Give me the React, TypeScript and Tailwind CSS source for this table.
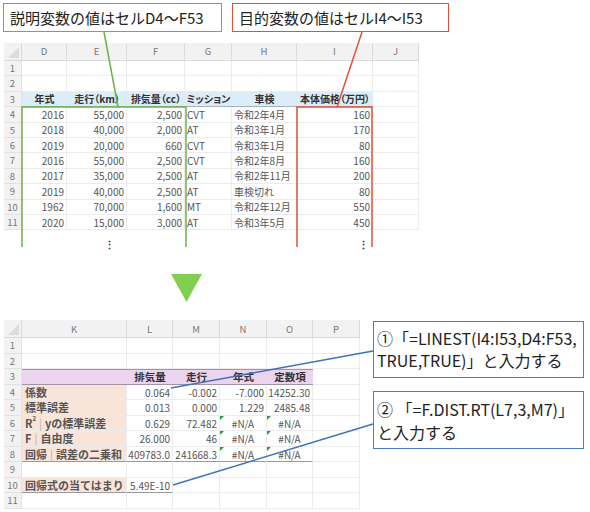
import React from "react";

const TOP = "grid grid-cols-[18px_45px_60px_58px_47px_65px_76px_46px]";
const BOT = "grid grid-cols-[18px_105px_46px_47px_47px_46px_47px]";

const topRows: string[][] = [
  ["2016", "55,000", "2,500", "CVT", "令和2年4月", "160"],
  ["2018", "40,000", "2,000", "AT", "令和3年1月", "170"],
  ["2019", "20,000", "660", "CVT", "令和3年1月", "80"],
  ["2016", "55,000", "2,500", "CVT", "令和2年8月", "160"],
  ["2017", "35,000", "2,500", "AT", "令和2年11月", "200"],
  ["2019", "40,000", "2,500", "AT", "車検切れ", "80"],
  ["1962", "70,000", "1,600", "MT", "令和2年12月", "550"],
  ["2020", "15,000", "3,000", "AT", "令和3年5月", "450"],
];

function RowHdr({ n, h }: { n: number; h: string }) {
  return (
    <div
      className={`${h} bg-[#f2f2f2] border-r border-b border-[#e2e2e2] text-[9.5px] text-[#777] flex items-center justify-center`}
    >
      {n}
    </div>
  );
}

function Corner() {
  return (
    <div className="h-[18px] bg-[#f2f2f2] border-r border-b border-[#dadada] relative">
      <div className="absolute right-[2px] bottom-[2px] w-0 h-0 border-l-[11px] border-l-transparent border-b-[11px] border-b-[#dcdcdc]" />
    </div>
  );
}

function ColHdr({ l }: { l: string }) {
  return (
    <div className="h-[18px] bg-[#f2f2f2] border-r border-b border-[#dadada] text-[9.5px] text-[#777] flex items-center justify-center">
      {l}
    </div>
  );
}

const tc = "h-[15.4px] border-r border-b border-[#ececec] text-[10px] text-[#555] flex items-center whitespace-nowrap";
const bc = "h-[15.5px] border-r border-b border-[#ececec] text-[10px] text-[#555] flex items-center whitespace-nowrap";

function ErrMark() {
  return (
    <div className="absolute left-0 top-0 w-0 h-0 border-t-[4px] border-t-[#2f9a3c] border-r-[4px] border-r-transparent" />
  );
}

function TopSheet() {
  return (
    <div className="ml-[4px] mt-[11px] w-[415px]">
      <div className={TOP}>
        <Corner />
        {["D", "E", "F", "G", "H", "I", "J"].map((c) => (
          <ColHdr key={c} l={c} />
        ))}
      </div>
      {[1, 2].map((n) => (
        <div key={n} className={TOP}>
          <RowHdr n={n} h="h-[15.4px]" />
          {[0, 1, 2, 3, 4, 5, 6].map((i) => (
            <div key={i} className={tc} />
          ))}
        </div>
      ))}
      <div className={TOP}>
        <RowHdr n={3} h="h-[15.4px]" />
        {["年式", "走行（km）", "排気量（cc）", "ミッション", "車検", "本体価格（万円）"].map((t) => (
          <div
            key={t}
            className="h-[15.4px] bg-[#dcedf8] border-b border-b-[#a5b2bb] text-[10px] font-bold text-[#333] flex items-center justify-center whitespace-nowrap [font-feature-settings:'palt']"
          >
            {t}
          </div>
        ))}
        <div className={tc} />
      </div>
      {topRows.map((r, idx) => (
        <div key={idx} className={TOP}>
          <RowHdr n={idx + 4} h="h-[15.4px]" />
          <div className={`${tc} justify-end pr-[2px]`}>{r[0]}</div>
          <div className={`${tc} justify-end pr-[2px]`}>{r[1]}</div>
          <div className={`${tc} justify-end pr-[2px]`}>{r[2]}</div>
          <div className={`${tc} pl-[2px]`}>{r[3]}</div>
          <div className={`${tc} pl-[2px]`}>{r[4]}</div>
          <div className={`${tc} justify-end pr-[2px]`}>{r[5]}</div>
          <div className={tc} />
        </div>
      ))}
      <div className="flex h-[22px] items-center pt-[6px] text-[11px] font-bold text-[#333] leading-none">
        <span className="ml-[100px]">⋮</span>
        <span className="ml-[243px]">⋮</span>
      </div>
    </div>
  );
}

const Sep = () => <span className="text-[#b0b0b0] font-normal mx-[3px]">|</span>;

function BotSheet() {
  const lbl = `${bc} bg-[#f9e4d9] font-bold !text-[11px] text-[#222] pl-[3px]`;
  const num = `${bc} justify-end pr-[2px]`;
  const na = `${bc} justify-center relative`;
  return (
    <div className="ml-[4px] w-[356px]">
      <div className={BOT}>
        <Corner />
        {["K", "L", "M", "N", "O", "P"].map((c) => (
          <ColHdr key={c} l={c} />
        ))}
      </div>
      {[1, 2].map((n) => (
        <div key={n} className={BOT}>
          <RowHdr n={n} h="h-[15.5px]" />
          {[0, 1, 2, 3, 4, 5].map((i) => (
            <div key={i} className={bc} />
          ))}
        </div>
      ))}
      <div className={BOT}>
        <RowHdr n={3} h="h-[15.5px]" />
        {["", "排気量", "走行", "年式", "定数項"].map((t, i) => (
          <div
            key={i}
            className="h-[15.5px] bg-[#ecd3ee] border-t border-b border-[#a493a6] text-[10.5px] font-bold text-[#333] flex items-center justify-center whitespace-nowrap"
          >
            {t}
          </div>
        ))}
        <div className={bc} />
      </div>
      <div className={BOT}>
        <RowHdr n={4} h="h-[15.5px]" />
        <div className={lbl}>係数</div>
        <div className={num}>0.064</div>
        <div className={num}>-0.002</div>
        <div className={num}>-7.000</div>
        <div className={num}>14252.30</div>
        <div className={bc} />
      </div>
      <div className={BOT}>
        <RowHdr n={5} h="h-[15.5px]" />
        <div className={lbl}>標準誤差</div>
        <div className={num}>0.013</div>
        <div className={num}>0.000</div>
        <div className={num}>1.229</div>
        <div className={num}>2485.48</div>
        <div className={bc} />
      </div>
      <div className={BOT}>
        <RowHdr n={6} h="h-[15.5px]" />
        <div className={lbl}>
          R<sup className="text-[6px] -top-[4px]">2</sup>
          <Sep />
          yの標準誤差
        </div>
        <div className={num}>0.629</div>
        <div className={num}>72.482</div>
        <div className={na}>
          <ErrMark />
          #N/A
        </div>
        <div className={na}>
          <ErrMark />
          #N/A
        </div>
        <div className={bc} />
      </div>
      <div className={BOT}>
        <RowHdr n={7} h="h-[15.5px]" />
        <div className={lbl}>
          F<Sep />自由度
        </div>
        <div className={num}>26.000</div>
        <div className={num}>46</div>
        <div className={na}>
          <ErrMark />
          #N/A
        </div>
        <div className={na}>
          <ErrMark />
          #N/A
        </div>
        <div className={bc} />
      </div>
      <div className={BOT}>
        <RowHdr n={8} h="h-[15.5px]" />
        <div className={`${lbl} border-b-[1.5px] border-b-[#9a9a9a]`}>
          回帰<Sep />誤差の二乗和
        </div>
        <div className={`${num} border-b-[1.5px] border-b-[#9a9a9a]`}>409783.0</div>
        <div className={`${num} border-b-[1.5px] border-b-[#9a9a9a]`}>241668.3</div>
        <div className={`${na} border-b-[1.5px] border-b-[#9a9a9a]`}>
          <ErrMark />
          #N/A
        </div>
        <div className={`${na} border-b-[1.5px] border-b-[#9a9a9a]`}>
          <ErrMark />
          #N/A
        </div>
        <div className={bc} />
      </div>
      <div className={BOT}>
        <RowHdr n={9} h="h-[15.5px]" />
        {[0, 1, 2, 3, 4, 5].map((i) => (
          <div key={i} className={bc} />
        ))}
      </div>
      <div className={BOT}>
        <RowHdr n={10} h="h-[15.5px]" />
        <div className={`${lbl} border-b-[1.5px] border-b-[#9a9a9a]`}>回帰式の当てはまり</div>
        <div className={`${num} border-b-[1.5px] border-b-[#9a9a9a]`}>5.49E-10</div>
        <div className={bc} />
        <div className={bc} />
        <div className={bc} />
        <div className={bc} />
      </div>
      <div className={BOT}>
        <RowHdr n={11} h="h-[15.5px]" />
        {[0, 1, 2, 3, 4, 5].map((i) => (
          <div key={i} className={bc} />
        ))}
      </div>
    </div>
  );
}

export default function App() {
  return (
    <div className="relative w-[590px] h-[512px] bg-white overflow-hidden font-['Noto_Sans_CJK_JP','Noto_Sans',sans-serif] text-[#222]">
      <div className="flex pt-[3px]">
        <div className="ml-[3px] w-[219px] h-[29px] border-[1.5px] border-[#70b046] pl-[6px] flex items-center text-[15px] leading-none whitespace-nowrap">
          説明変数の値はセルD4〜F53
        </div>
        <div className="ml-[10px] w-[217px] h-[29px] border-[1.5px] border-[#e2503d] pl-[6px] flex items-center text-[15px] leading-none whitespace-nowrap">
          目的変数の値はセルI4〜I53
        </div>
      </div>

      <TopSheet />

      <div className="ml-[171px] mt-[22px] w-[31px] h-[28px]">
        <svg width="31" height="28" viewBox="0 0 31 28">
          <polygon points="0,0 31,0 15.5,28" fill="#80cf50" />
        </svg>
      </div>

      <div className="flex mt-[18px]">
        <BotSheet />
        <div className="ml-[13px] flex flex-col gap-[13px] pt-[1px]">
          <div className="w-[211px] h-[57px] border-[1.5px] border-[#4a7ec2] pl-[3px] pt-[5px] text-[16px] leading-[22px] whitespace-nowrap">
            ①「=LINEST(I4:I53,D4:F53,
            <br />
            TRUE,TRUE)」と入力する
          </div>
          <div className="w-[211px] h-[58px] border-[1.5px] border-[#4a7ec2] pl-[3px] pt-[6px] text-[16px] leading-[23px] whitespace-nowrap">
            ② 「=F.DIST.RT(L7,3,M7)」
            <br />
            と入力する
          </div>
        </div>
      </div>

      <svg className="absolute left-0 top-0 pointer-events-none" width="590" height="512" viewBox="0 0 590 512">
        <polyline points="22,247 22,107 186,107 186,247" fill="none" stroke="#70b046" strokeWidth="1.5" />
        <line x1="104" y1="32" x2="118" y2="107" stroke="#70b046" strokeWidth="1.5" />
        <polyline points="297,247 297,107 372,107 372,247" fill="none" stroke="#e2503d" strokeWidth="1.5" />
        <line x1="362" y1="32" x2="337" y2="107" stroke="#e2503d" strokeWidth="1.5" />
        <line x1="373" y1="351" x2="171" y2="388" stroke="#3d74b8" strokeWidth="1.5" />
        <line x1="373" y1="424" x2="173" y2="485" stroke="#3d74b8" strokeWidth="1.5" />
      </svg>
    </div>
  );
}
